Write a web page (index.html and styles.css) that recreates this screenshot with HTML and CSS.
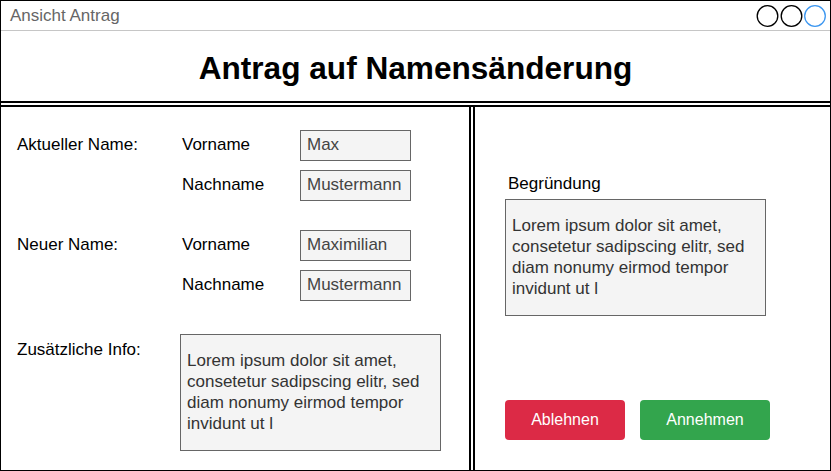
FILE: index.html
```html
<!DOCTYPE html>
<html lang="de">
<head>
<meta charset="utf-8">
<title>Ansicht Antrag</title>
<link rel="stylesheet" href="styles.css">
</head>
<body>
<div class="window">
  <div class="titlebar">
    <span class="title">Ansicht Antrag</span>
    <svg class="controls" width="72" height="29" viewBox="0 0 72 29">
      <circle cx="12.5" cy="15" r="10.3" fill="none" stroke="#000" stroke-width="1.3"/>
      <circle cx="36.5" cy="15" r="10.3" fill="none" stroke="#000" stroke-width="1.3"/>
      <circle cx="60" cy="15" r="10.3" fill="none" stroke="#3d97f0" stroke-width="1.3"/>
    </svg>
  </div>
  <div class="header"><h1>Antrag auf Namensänderung</h1></div>
  <div class="main">
    <div class="left">
      <div class="row">
        <span class="label">Aktueller Name:</span>
        <span class="sub">Vorname</span>
        <span class="input">Max</span>
      </div>
      <div class="row gap-s">
        <span class="label"></span>
        <span class="sub">Nachname</span>
        <span class="input">Mustermann</span>
      </div>
      <div class="row gap-l">
        <span class="label">Neuer Name:</span>
        <span class="sub">Vorname</span>
        <span class="input">Maximilian</span>
      </div>
      <div class="row gap-s">
        <span class="label"></span>
        <span class="sub">Nachname</span>
        <span class="input">Mustermann</span>
      </div>
      <div class="info-row">
        <span class="label info-label">Zusätzliche Info:</span>
        <div class="textbox">Lorem ipsum dolor sit amet,<br>consetetur sadipscing elitr, sed<br>diam nonumy eirmod tempor<br>invidunt ut l</div>
      </div>
    </div>
    <div class="right">
      <div class="reason-label">Begründung</div>
      <div class="textbox">Lorem ipsum dolor sit amet,<br>consetetur sadipscing elitr, sed<br>diam nonumy eirmod tempor<br>invidunt ut l</div>
      <div class="buttons">
        <button class="btn btn-reject">Ablehnen</button>
        <button class="btn btn-accept">Annehmen</button>
      </div>
    </div>
  </div>
</div>
</body>
</html>
```

FILE: styles.css
```css
* { box-sizing: border-box; }

html, body {
  margin: 0;
  padding: 0;
  background: #fff;
}

body {
  font-family: "Liberation Sans", Arial, Helvetica, sans-serif;
  font-size: 17px;
  color: #000;
}

.window {
  width: 831px;
  height: 471px;
  border: 1px solid #000;
  display: flex;
  flex-direction: column;
  overflow: hidden;
}

.titlebar {
  height: 30px;
  border-bottom: 1px solid #c6c6c6;
  display: flex;
  align-items: flex-start;
  justify-content: space-between;
  padding: 0 3px 0 9px;
}

.title {
  color: #666;
  font-size: 17px;
  line-height: 29px;
}

.controls {
  display: block;
}

.header {
  height: 72px;
  border-bottom: 2px solid #000;
  margin-bottom: 2px;
  display: flex;
  align-items: center;
  justify-content: center;
}

.header h1 {
  margin: 0;
  font-size: 31.6px;
  font-weight: bold;
  line-height: 36px;
  margin-top: 3px;
}

.main {
  flex: 1;
  border-top: 2px solid #000;
  display: flex;
}

.left {
  width: 470px;
  border-right: 2px solid #000;
  margin-right: 2px;
  padding: 23px 0 0 16px;
  display: flex;
  flex-direction: column;
}

.row {
  display: flex;
  align-items: center;
  height: 30px;
}

.gap-s { margin-top: 10px; }
.gap-l { margin-top: 30px; }

.label {
  width: 163px;
  flex: none;
  margin-top: -1px;
}

.sub {
  width: 120px;
  flex: none;
  padding-left: 2px;
  margin-top: -1px;
}

.input {
  width: 111px;
  height: 31px;
  border: 1px solid #666;
  background: #f4f4f4;
  color: #444;
  padding-left: 6px;
  padding-bottom: 1px;
  display: flex;
  align-items: center;
}

.info-row {
  display: flex;
  align-items: flex-start;
  margin-top: 34px;
}

.info-label {
  padding-top: 7px;
}

.textbox {
  width: 261px;
  height: 117px;
  border: 1px solid #666;
  background: #f4f4f4;
  color: #333;
  line-height: 21px;
  padding: 0 0 1px 6px;
  display: flex;
  align-items: center;
}

.right {
  flex: 1;
  border-left: 2px solid #000;
  padding: 67px 0 0 30px;
  display: flex;
  flex-direction: column;
}

.reason-label {
  line-height: 20px;
  padding-left: 3px;
  margin-bottom: 5px;
}

.buttons {
  display: flex;
  gap: 15px;
  margin-top: 84px;
}

.btn {
  height: 40px;
  border: none;
  border-radius: 4px;
  color: #fff;
  font-family: "Liberation Sans", Arial, Helvetica, sans-serif;
  font-size: 16px;
  padding: 0;
  cursor: pointer;
}

.btn-reject {
  width: 120px;
  background: #dc2a46;
}

.btn-accept {
  width: 130px;
  background: #33a54d;
}
```
